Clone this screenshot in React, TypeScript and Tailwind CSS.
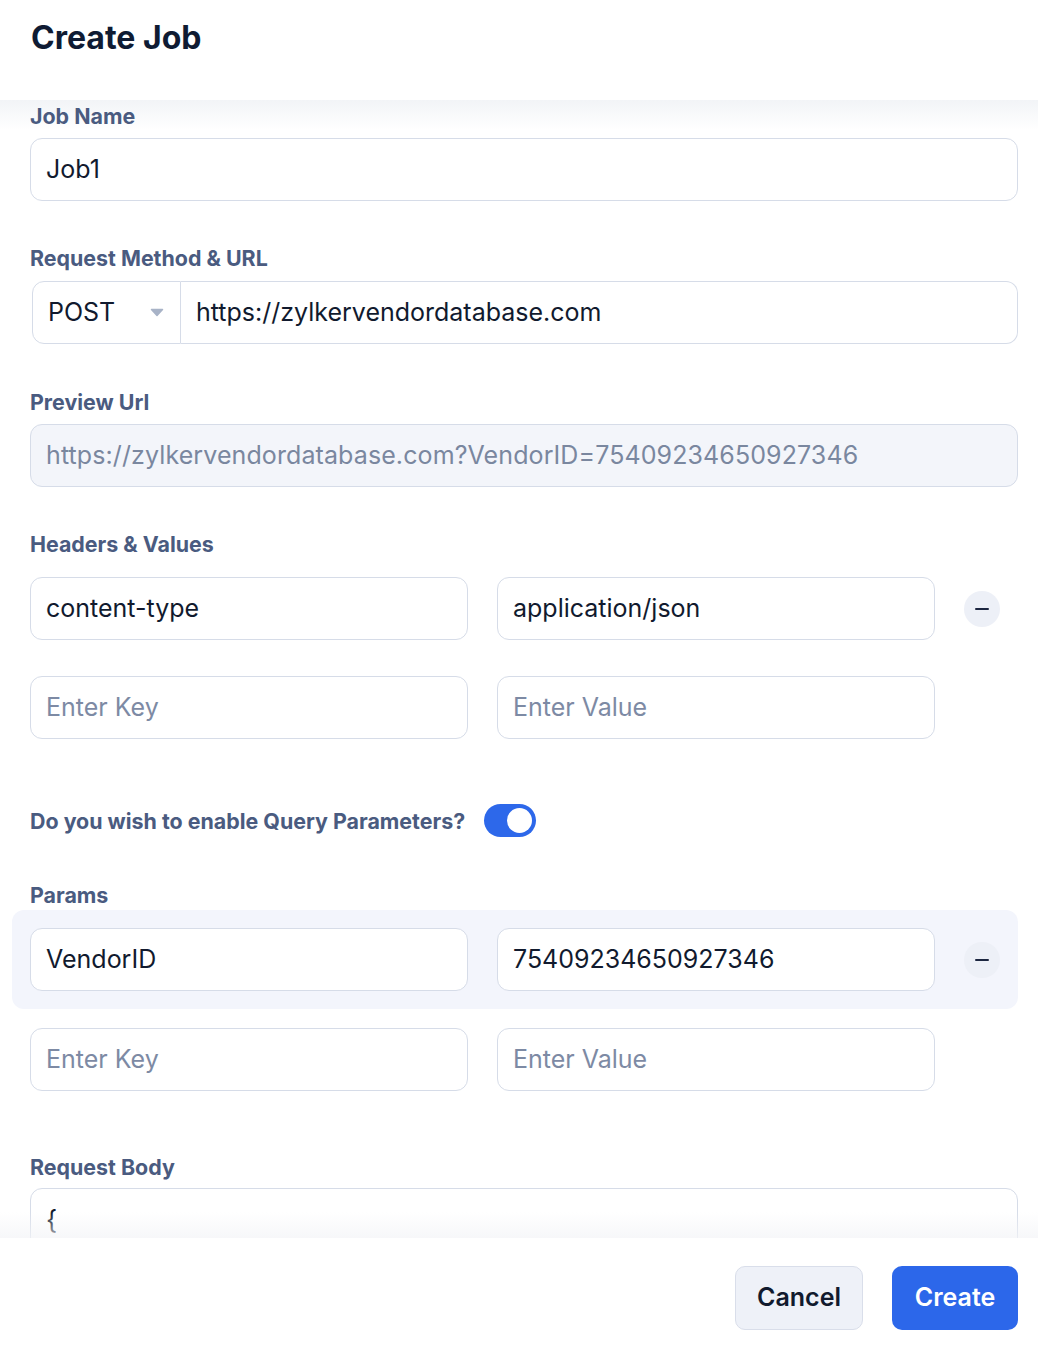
import React, { useState } from 'react';

const font = { fontFamily: 'Inter, "Noto Sans", sans-serif' };

const Label: React.FC<{ children: React.ReactNode; className?: string }> = ({ children, className = '' }) => (
  <div className={`text-[21.4px] leading-[24px] font-bold text-[#4a5b80] ${className}`}>{children}</div>
);

const Field: React.FC<{ value?: string; placeholder?: string; className?: string }> = ({ value, placeholder, className = '' }) => (
  <div
    className={`h-[63px] flex items-center pl-[15px] rounded-[12px] border border-[#d6dce8] bg-white text-[25px] ${className}`}
  >
    {value ? <span className="text-[#111a2e]">{value}</span> : <span className="text-[#7d8aa4]">{placeholder}</span>}
  </div>
);

const MinusButton: React.FC = () => (
  <div className="w-[36px] h-[36px] rounded-full bg-[#edf0f7] flex items-center justify-center">
    <div className="w-[14px] h-[2px] rounded-full bg-[#1c2640]" />
  </div>
);

const KeyValueRow: React.FC<{ k?: string; v?: string; removable?: boolean }> = ({ k, v, removable }) => (
  <div className="flex items-center">
    <Field value={k} placeholder="Enter Key" className="w-[438px]" />
    <Field value={v} placeholder="Enter Value" className="w-[438px] ml-[29px]" />
    <div className="w-[83px] flex justify-end pr-[18px]">{removable && <MinusButton />}</div>
  </div>
);

const App: React.FC = () => {
  const [queryOn, setQueryOn] = useState(true);

  return (
    <div className="h-[1350px] w-full bg-white flex flex-col overflow-hidden" style={font}>
      {/* header */}
      <div className="h-[100px] shrink-0 px-[31px] pt-[18px]">
        <h1 className="text-[32px] leading-[40px] font-bold text-[#0f1b33]">Create Job</h1>
      </div>

      {/* scrolling body */}
      <div className="relative flex-1 overflow-hidden">
        <div className="absolute top-0 left-0 right-0 h-[30px] bg-gradient-to-b from-[#f2f4f7] to-transparent pointer-events-none" />
        <div className="absolute bottom-0 left-0 right-0 h-[26px] bg-gradient-to-t from-[#f3f4f7]/70 to-transparent z-10 pointer-events-none" />

        <div className="relative px-[30px] pr-[20px] pt-[4px]">
          <Label>Job Name</Label>
          <Field value="Job1" className="mt-[10px] w-[988px]" />

          <Label className="mt-[45px]">Request Method &amp; URL</Label>
          <div className="mt-[11px] flex w-[988px]">
            <div className="ml-[2px] w-[149px] h-[63px] flex items-center justify-between pl-[15px] pr-[16px] border border-[#d6dce8] rounded-l-[12px] bg-white">
              <span className="text-[25px] text-[#111a2e]">POST</span>
              <svg width="14" height="9" viewBox="0 0 14 9">
                <path d="M1.5 1.5 H12.5 L7 7.5 Z" fill="#a8b3c7" stroke="#a8b3c7" strokeWidth="1.5" strokeLinejoin="round" />
              </svg>
            </div>
            <div className="flex-1 h-[63px] flex items-center pl-[15px] border border-l-0 border-[#d6dce8] rounded-r-[12px] bg-white text-[25px] text-[#111a2e]">
              https://zylkervendordatabase.com
            </div>
          </div>

          <Label className="mt-[46px]">Preview Url</Label>
          <div className="mt-[10px] w-[988px] h-[63px] flex items-center pl-[15px] rounded-[12px] border border-[#d6dce8] bg-[#f3f5fa] text-[25px] tracking-[0.1px] text-[#7a879f]">
            https://zylkervendordatabase.com?VendorID=75409234650927346
          </div>

          <Label className="mt-[45px]">Headers &amp; Values</Label>
          <div className="mt-[21px]">
            <KeyValueRow k="content-type" v="application/json" removable />
          </div>
          <div className="mt-[36px]">
            <KeyValueRow />
          </div>

          <div className="mt-[65px] flex items-center">
            <Label>Do you wish to enable Query Parameters?</Label>
            <button
              onClick={() => setQueryOn(!queryOn)}
              className={`ml-[19px] w-[52px] h-[33px] rounded-full p-[4px] flex items-center ${queryOn ? 'bg-[#2d68ea] justify-end' : 'bg-[#cfd6e3] justify-start'}`}
            >
              <span className="w-[25px] h-[25px] rounded-full bg-white block" />
            </button>
          </div>

          <Label className="mt-[46px]">Params</Label>
          <div className="mt-[3px] -ml-[18px] w-[1006px] py-[18px] pl-[18px] rounded-[12px] bg-[#f3f5fc]">
            <KeyValueRow k="VendorID" v="75409234650927346" removable />
          </div>
          <div className="mt-[19px]">
            <KeyValueRow />
          </div>

          <Label className="mt-[64px]">Request Body</Label>
          <div className="mt-[9px] w-[988px] h-[200px] rounded-[12px] border border-[#d6dce8] bg-white pl-[15px] pt-[11px] text-[26px] text-[#111a2e]">
            {'{'}
          </div>
        </div>
      </div>

      {/* footer */}
      <div className="h-[112px] shrink-0 flex items-start justify-end gap-[29px] pr-[20px] pt-[28px]">
        <button className="w-[128px] h-[64px] rounded-[10px] bg-[#eef1f8] border border-[#d9deea] text-[25px] font-semibold text-[#111a2e]">
          Cancel
        </button>
        <button className="w-[126px] h-[64px] rounded-[10px] bg-[#2c67ea] text-[25px] font-semibold text-white">
          Create
        </button>
      </div>
    </div>
  );
};

export default App;
